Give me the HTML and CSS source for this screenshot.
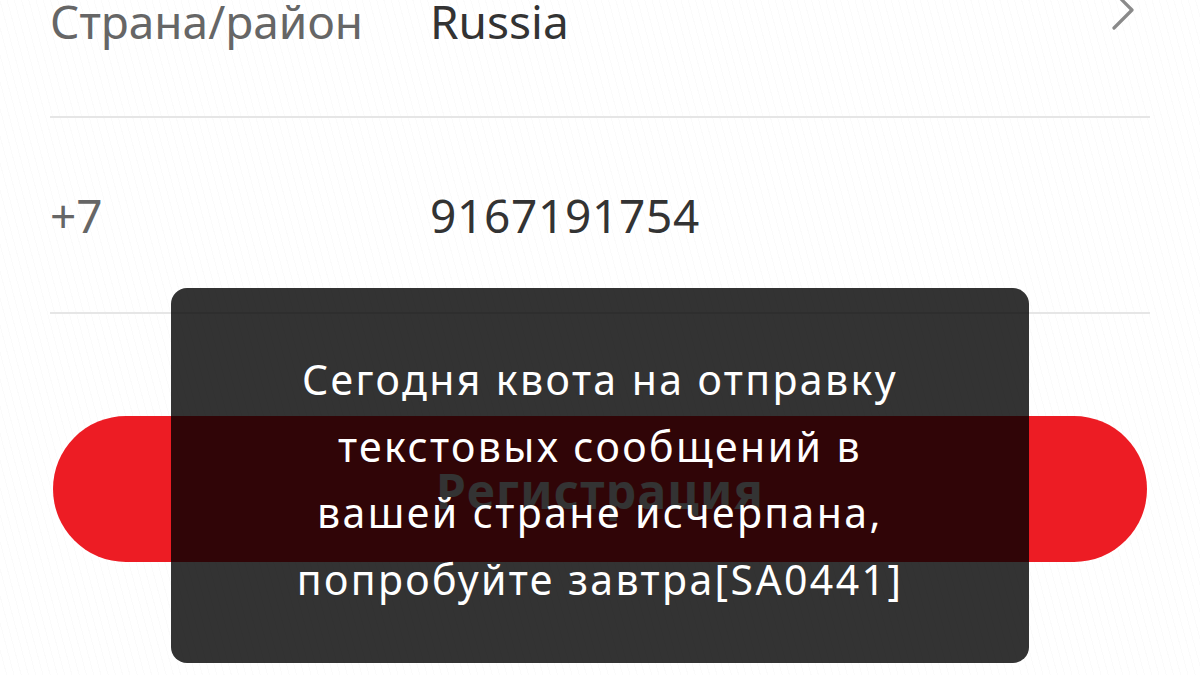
FILE: index.html
```html
<!DOCTYPE html>
<html lang="ru">
<head>
<meta charset="utf-8">
<title>Регистрация</title>
<link rel="stylesheet" href="styles.css">
</head>
<body>
<div class="page">
  <div class="form">
    <div class="row row-first">
      <span class="label">Страна/район</span>
      <span class="value">Russia</span>
      <svg class="chevron" width="26" height="44" viewBox="0 0 26 44" aria-hidden="true">
        <path d="M4 4 L22 22 L4 40" fill="none" stroke="#8a8a8a" stroke-width="3.2" stroke-linecap="round" stroke-linejoin="round"/>
      </svg>
    </div>
    <div class="row">
      <span class="label">+7</span>
      <span class="value value-num">9167191754</span>
    </div>
  </div>
  <div class="actions">
    <button class="btn-primary" type="button">Регистрация</button>
  </div>
  <div class="toast">
    <p class="toast-text">Сегодня квота на отправку<br>текстовых сообщений в<br>вашей стране исчерпана,<br>попробуйте завтра[SA0441]</p>
  </div>
</div>
</body>
</html>
```
FILE: styles.css
```css
* { box-sizing: border-box; }
html, body {
  margin: 0;
  padding: 0;
  background: #ffffff;
}
body {
  font-family: "Noto Sans", Roboto, "Liberation Sans", sans-serif;
  width: 1200px;
  height: 675px;
  overflow: hidden;
}
.page {
  position: relative;
  width: 1200px;
  height: 675px;
  overflow: hidden;
  background: repeating-linear-gradient(75deg, #ffffff 0px, #ffffff 6px, #fbfbfb 6px, #fbfbfb 7px);
}
.form {
  margin: -74px 50px 0 50px;
}
.row {
  display: flex;
  align-items: center;
  height: 196px;
  border-bottom: 2px solid #e6e6e6;
}
.row-first {
  height: 192px;
}
.label {
  width: 380px;
  flex: none;
  font-size: 46px;
  color: #666666;
}
.value {
  font-size: 46px;
  color: #333333;
}
.value-num {
  letter-spacing: 0.7px;
}
.chevron {
  margin-left: auto;
  margin-right: 14px;
  margin-bottom: 22px;
}
.actions {
  padding: 102px 53px 0 53px;
}
.btn-primary {
  display: block;
  width: 100%;
  height: 146px;
  border: none;
  border-radius: 73px;
  background: #ed1c24;
  color: #ffffff;
  font-family: inherit;
  font-size: 48px;
  font-weight: 700;
  letter-spacing: 1.3px;
  padding: 2px 0 0 0;
}
.toast {
  position: absolute;
  left: 171px;
  top: 288px;
  width: 858px;
  height: 375px;
  border-radius: 16px;
  background: rgba(0, 0, 0, 0.8);
  padding: 58px 20px 0 20px;
}
.toast-text {
  margin: 0;
  color: #ffffff;
  font-size: 41px;
  letter-spacing: 2.4px;
  line-height: 66.5px;
  text-align: center;
}
```
